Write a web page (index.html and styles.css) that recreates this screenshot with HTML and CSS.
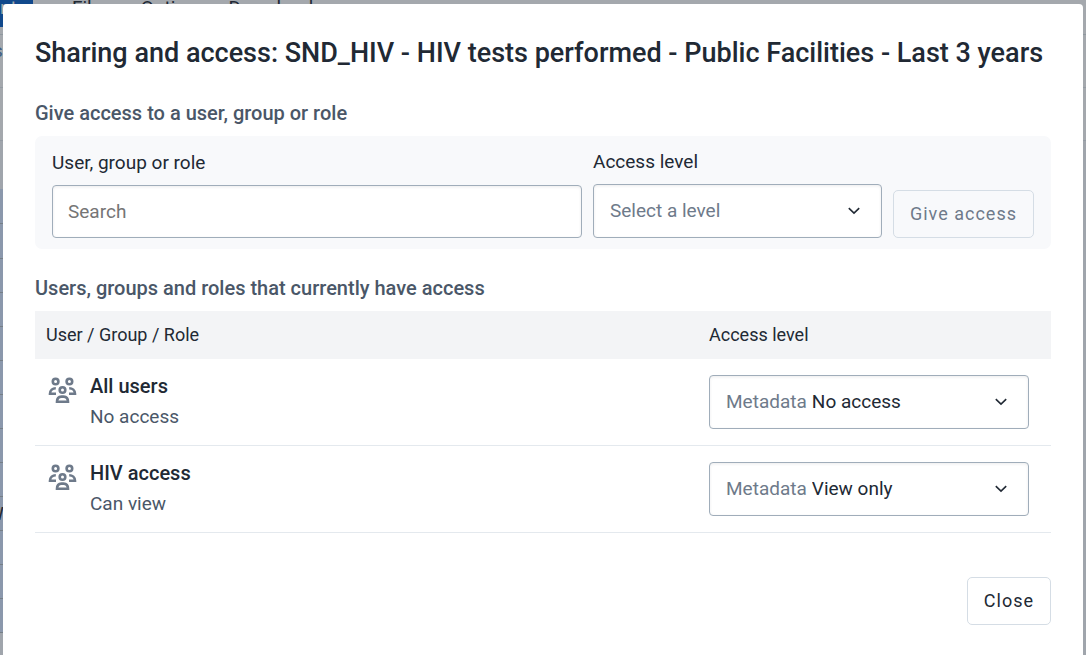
FILE: index.html
```html
<!DOCTYPE html>
<html lang="en">
<head>
<meta charset="utf-8">
<meta name="viewport" content="width=device-width, initial-scale=1">
<title>Sharing and access</title>
<link rel="stylesheet" href="styles.css">
</head>
<body>
<svg class="sprite" aria-hidden="true">
  <symbol id="users" viewBox="0 0 32 32" fill="none" stroke="currentColor" stroke-width="2.6">
    <circle cx="9.6" cy="6.5" r="2.8"/>
    <circle cx="23.4" cy="6.5" r="2.8"/>
    <circle cx="16.5" cy="15" r="2.8"/>
    <path d="M9.8 13.2c-3.2 0-5.8 2-5.8 5.6h6M23.2 13.2c3.2 0 5.8 2 5.8 5.6h-6"/>
    <path d="M11 26.8c0-3.4 2-5.2 4.4-5.2h2.2c2.4 0 4.4 1.8 4.4 5.2z"/>
  </symbol>
  <symbol id="chevron" viewBox="0 0 12 8" fill="none" stroke="currentColor" stroke-width="1.6">
    <path d="M.8 1.2 6 6.2l5.2-5"/>
  </symbol>
</svg>

<div class="app" aria-hidden="true">
  <div class="toolbar"><span class="tab">nt</span><span class="file">File</span><span>Options</span><span>Download</span></div>
  <div class="dimension first">s</div>
  <div class="dimension"></div>
  <div class="rows">
    <div class="row wide"></div><div class="row wide"></div>
    <div class="row"></div><div class="row"></div><div class="row"></div><div class="row"></div>
    <div class="row"></div><div class="row"></div><div class="row"></div><div class="row">W</div>
    <div class="row"></div><div class="row"></div><div class="row">-</div>
  </div>
</div>

<div class="overlay">
  <main class="modal" role="dialog" aria-modal="true" aria-labelledby="title">
    <h1 id="title">Sharing and access: SND_HIV - HIV tests performed - Public Facilities - Last 3 years</h1>

    <h2>Give access to a user, group or role</h2>
    <form class="give">
      <div class="field search">
        <label for="search">User, group or role</label>
        <input class="box" id="search" type="text" placeholder="Search">
      </div>
      <div class="field level">
        <label for="level">Access level</label>
        <div class="box">
          <select class="muted" id="level"><option>Select a level</option></select>
          <svg class="chevron"><use href="#chevron"/></svg>
        </div>
      </div>
      <button class="button" type="button" disabled>Give access</button>
    </form>

    <h2>Users, groups and roles that currently have access</h2>
    <table class="access">
      <thead>
        <tr><th scope="col">User / Group / Role</th><th class="level-column" scope="col">Access level</th></tr>
      </thead>
      <tbody>
        <tr>
          <td>
            <div class="who">
              <svg class="users"><use href="#users"/></svg>
              <div><p class="name">All users</p><p class="rights">No access</p></div>
            </div>
          </td>
          <td>
            <div class="box">
              <label for="all">Metadata</label>
              <select id="all"><option>No access</option><option>View only</option></select>
              <svg class="chevron"><use href="#chevron"/></svg>
            </div>
          </td>
        </tr>
        <tr>
          <td>
            <div class="who">
              <svg class="users"><use href="#users"/></svg>
              <div><p class="name">HIV access</p><p class="rights">Can view</p></div>
            </div>
          </td>
          <td>
            <div class="box">
              <label for="hiv">Metadata</label>
              <select id="hiv"><option>View only</option><option>No access</option></select>
              <svg class="chevron"><use href="#chevron"/></svg>
            </div>
          </td>
        </tr>
      </tbody>
    </table>

    <div class="actions"><button class="button" type="button">Close</button></div>
  </main>
</div>
</body>
</html>
```
FILE: styles.css
```css
* { box-sizing: border-box; }

body {
  margin: 0;
  min-height: 100vh;
  position: relative;
  overflow: hidden;
  background: #a0a5ac;
  color: #212934;
  font: 19px/24px Roboto, sans-serif;
}

h1, h2, p { margin: 0; font-weight: 500; }

.sprite { position: absolute; width: 0; height: 0; }

.app {
  position: absolute;
  inset: 0;
  overflow: hidden;
}

.toolbar {
  display: flex;
  gap: 22px;
  height: 35px;
  border-bottom: 1px solid #8f989f;
  background: #a4a8ad;
  line-height: 16px;
}

.tab {
  width: 33px;
  height: 27px;
  margin-right: 17px;
  background: #11498c;
  color: #a4a8ad;
}

.file { margin-right: 17px; }

.dimension {
  height: 53px;
  border-bottom: 1px solid #949ba3;
  background: #a4a8ad;
}

.first { padding-top: 4px; color: #405f83; text-indent: -7px; }

.rows { width: 40px; padding-top: 48px; }

.row {
  height: 34px;
  border-bottom: 1px solid #767f87;
  background: #8b98ac;
  text-indent: -13px;
  line-height: 34px;
}

.row.wide { height: 35px; }

.overlay {
  position: relative;
  min-height: 100vh;
  padding: 4px 3px 0;
  display: flex;
}

.modal {
  flex: 1;
  min-width: 0;
  padding: 32px;
  border-radius: 4px 4px 0 0;
  background: #fff;
}

h1 {
  margin-bottom: 32px;
  font-size: 27px;
  line-height: 34px;
}

h2 {
  margin-bottom: 12px;
  color: #4a5768;
  font-size: 20px;
  line-height: 22px;
}

.give {
  display: flex;
  align-items: flex-end;
  gap: 11px;
  margin-bottom: 28px;
  padding: 14px 17px 11px;
  border-radius: 7px;
  background: #f8f9fb;
}

.field {
  display: flex;
  flex-direction: column;
  gap: 10px;
  min-width: 0;
}

.search { flex: 1; }
.level { flex: 0 0 289px; }

.box {
  display: flex;
  align-items: center;
  gap: 5px;
  width: 100%;
  height: 54px;
  padding: 0 21px 0 16px;
  border: 1px solid #a0adba;
  border-radius: 4px;
  background: #fff;
  box-shadow: inset 0 1px 3px #30364218;
  color: inherit;
  font: inherit;
}

.search .box { height: 53px; padding: 0 15px; }

.box::placeholder { color: #757575; }
.box label, .muted { color: #6e7a8a; }

select {
  flex: 1;
  min-width: 0;
  padding: 0;
  border: 0;
  background: none;
  color: inherit;
  font: inherit;
  appearance: none;
}

select.muted { color: #6e7a8a; }

.chevron { width: 12px; height: 8px; color: #212934; }

.button {
  height: 48px;
  padding: 0 16px;
  border: 1px solid #d5dde5;
  border-radius: 5px;
  background: none;
  color: #212934;
  font: inherit;
  font-size: 18px;
  letter-spacing: 1px;
}

.button:disabled { color: #6e7a8a; }

.access {
  width: 100%;
  border-collapse: collapse;
}

th {
  height: 48px;
  padding: 0 11px;
  background: #f3f4f6;
  font-size: 18px;
  font-weight: 400;
  text-align: left;
}

.level-column { width: 353px; }

tbody tr { border-bottom: 1px solid #e4e9ee; }

td { padding: 16px 22px 16px 11px; }

.who { display: flex; gap: 12px; }

.users { width: 32px; height: 32px; color: #6e7a8a; }

.name { font-size: 20px; line-height: 22px; }

.rights {
  margin-top: 8px;
  color: #4a5768;
  font-weight: 400;
}

.actions {
  display: flex;
  justify-content: flex-end;
  margin-top: 44px;
}
```
